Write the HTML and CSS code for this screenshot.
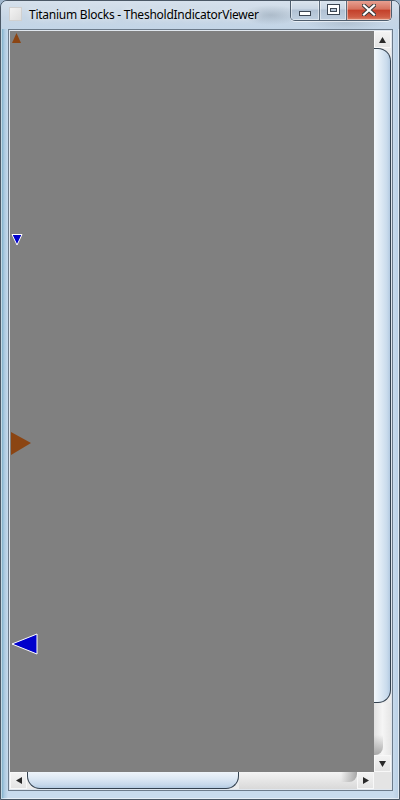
FILE: index.html
```html
<!DOCTYPE html>
<html>
<head>
<meta charset="utf-8">
<title>Titanium Blocks - ThesholdIndicatorViewer</title>
<link rel="stylesheet" href="styles.css">
</head>
<body>
<div class="window">
  <div class="titlebar">
    <div class="appicon"></div>
    <div class="title">Titanium Blocks - ThesholdIndicatorViewer</div>
    <div class="caption">
      <div class="cbtn min"><span class="min-glyph"></span></div>
      <div class="cbtn max"><span class="max-glyph"></span></div>
      <div class="cbtn close">
        <svg width="14" height="12" viewBox="0 0 14 12">
          <path d="M2 1.5 L12 10.5 M12 1.5 L2 10.5" stroke="#3a3a3a" stroke-width="4.2" stroke-linecap="square"/>
          <path d="M2 1.5 L12 10.5 M12 1.5 L2 10.5" stroke="#ffffff" stroke-width="2.2" stroke-linecap="square"/>
        </svg>
      </div>
    </div>
  </div>
  <div class="client">
    <div class="content">
      <svg class="canvas" width="364" height="741" viewBox="0 0 364 741">
        <polygon points="6.5,2 2,12 11,12" fill="#8b4513"/>
        <polygon points="2,203.5 12,203.5 7,214" fill="#0000cc" stroke="#ffffff" stroke-width="1"/>
        <polygon points="1,401 1,424 21,412" fill="#8b4513"/>
        <polygon points="2,613 27,603 27,623" fill="#0000cc" stroke="#ffffff" stroke-width="1"/>
      </svg>
    </div>
    <div class="vscroll">
      <div class="sbtn">
        <svg width="7" height="6" viewBox="0 0 7 6"><polygon points="3.5,0 7,6 0,6" fill="#2a2a2a"/></svg>
      </div>
      <div class="vthumb"></div>
      <div class="vtrack"></div>
      <div class="sbtn">
        <svg width="7" height="6" viewBox="0 0 7 6"><polygon points="0,0 7,0 3.5,6" fill="#2a2a2a"/></svg>
      </div>
    </div>
    <div class="hscroll">
      <div class="sbtn">
        <svg width="6" height="7" viewBox="0 0 6 7"><polygon points="0,3.5 6,0 6,7" fill="#2a2a2a"/></svg>
      </div>
      <div class="hthumb"></div>
      <div class="htrack"></div>
      <div class="sbtn">
        <svg width="6" height="7" viewBox="0 0 6 7"><polygon points="0,0 6,3.5 0,7" fill="#2a2a2a"/></svg>
      </div>
    </div>
    <div class="corner"></div>
  </div>
</div>
</body>
</html>
```

FILE: styles.css
```css
html, body {
  margin: 0;
  padding: 0;
  background: #9fb6cc;
}

.window {
  box-sizing: border-box;
  width: 400px;
  height: 800px;
  border: 1px solid #4b5866;
  border-radius: 7px 7px 0 0;
  display: flex;
  flex-direction: column;
  background:
    linear-gradient(to right, #6aa3bf 0px, #a9c8df 3px, #c8dbed 7px, #c8dbed 392px, #b4cbe2 399px);
  box-shadow: inset 0 0 0 1px rgba(255,255,255,0.55);
  overflow: hidden;
}

.titlebar {
  height: 28px;
  display: flex;
  align-items: flex-start;
  padding-left: 8px;
  padding-right: 7px;
  background:
    radial-gradient(ellipse 30px 10px at 270px 14px, rgba(120,135,150,0.35), transparent),
    radial-gradient(ellipse 40px 8px at 345px 22px, rgba(120,135,150,0.25), transparent),
    linear-gradient(to bottom, #d6e1ec 0%, #c7d6e5 60%, #c3d5e7 100%);
}

.appicon {
  width: 13px;
  height: 14px;
  margin-top: 6px;
  background: linear-gradient(135deg, #f4f4f4, #dcdcdc);
  box-shadow: inset 0 0 0 1px #d0d0d0;
}

.title {
  margin-left: 7px;
  margin-top: 6px;
  font-family: "Noto Sans", "Open Sans", sans-serif;
  font-size: 12px;
  line-height: 16px;
  color: #000;
  letter-spacing: -0.25px;
  white-space: nowrap;
  text-shadow: 0 0 6px rgba(255,255,255,0.9);
}

.caption {
  margin-left: auto;
  margin-top: -1px;
  display: flex;
  height: 20px;
  border: 1px solid #4e5d6d;
  border-top: none;
  border-radius: 0 0 5px 5px;
  overflow: hidden;
  box-shadow: 0 1px 0 rgba(255,255,255,0.6);
}

.cbtn {
  display: flex;
  align-items: center;
  justify-content: center;
  box-shadow: inset 0 0 0 1px rgba(255,255,255,0.45);
}

.min {
  width: 28px;
  border-right: 1px solid #5d6c7c;
  background: linear-gradient(to bottom, #dde6ef 0%, #c9d6e4 45%, #b1c1d3 50%, #bfcfe0 100%);
}

.max {
  width: 26px;
  border-right: 1px solid #5d6c7c;
  background: linear-gradient(to bottom, #dde6ef 0%, #c9d6e4 45%, #b1c1d3 50%, #bfcfe0 100%);
}

.close {
  width: 44px;
  background: linear-gradient(to bottom, #e9a597 0%, #d6735f 45%, #c4412b 52%, #cf5d45 85%, #de8a6f 100%);
}

.min-glyph {
  width: 10px;
  height: 3px;
  margin-top: 7px;
  background: #fff;
  border: 1px solid #3c4653;
}

.max-glyph {
  box-sizing: border-box;
  width: 11px;
  height: 9px;
  margin-bottom: 1px;
  border: 2px solid #fff;
  border-top-width: 3px;
  outline: 1px solid #3c4653;
  box-shadow: inset 0 0 0 1px #3c4653;
}

.client {
  margin: 0 6px 0 7px;
  border: 1px solid #6c7b8b;
  padding: 1px;
  background: #dfe6ee;
  display: grid;
  grid-template-columns: 364px 17px;
  grid-template-rows: 741px 17px;
}

.content {
  background: #808080;
  overflow: hidden;
}

.canvas {
  display: block;
}

.vscroll {
  display: flex;
  flex-direction: column;
  background: #ececec;
}

.hscroll {
  display: flex;
  background: #ececec;
}

.sbtn {
  flex: 0 0 17px;
  height: 17px;
  display: flex;
  align-items: center;
  justify-content: center;
  background: linear-gradient(to bottom, #f4f4f4, #e3e3e3);
  box-shadow: inset 0 0 0 1px #f8f8f8;
}

.vthumb {
  box-sizing: border-box;
  height: 655px;
  border: 1px solid #33414f;
  border-left: none;
  border-radius: 0 13px 13px 0;
  background: linear-gradient(to right, #f3f8fc 0%, #dde9f4 45%, #c9dbec 80%, #b4cbe2 100%);
}

.vtrack {
  flex: 1;
  position: relative;
  background: linear-gradient(to right, #e2e2e2, #f5f5f5 50%, #e6e6e6);
}

.vtrack::after {
  content: "";
  position: absolute;
  left: 0;
  bottom: 0;
  width: 9px;
  height: 20px;
  border-radius: 0 0 8px 0;
  background: linear-gradient(to bottom, rgba(160,160,160,0), #a7a7a7);
}

.hthumb {
  box-sizing: border-box;
  width: 212px;
  height: 17px;
  border: 1px solid #33414f;
  border-top: none;
  border-radius: 0 0 13px 13px;
  background: linear-gradient(to bottom, #eef4fa 0%, #dbe7f3 45%, #c7d9eb 80%, #b4cbe2 100%);
}

.htrack {
  flex: 1;
  position: relative;
  background: linear-gradient(to bottom, #f4f4f4, #e6e6e6 50%, #d9d9d9);
}

.htrack::after {
  content: "";
  position: absolute;
  right: 0;
  top: 0;
  width: 16px;
  height: 10px;
  border-radius: 0 0 8px 0;
  background: linear-gradient(to right, rgba(160,160,160,0), #a7a7a7);
}

.corner {
  background: #e4e4e4;
}
```
